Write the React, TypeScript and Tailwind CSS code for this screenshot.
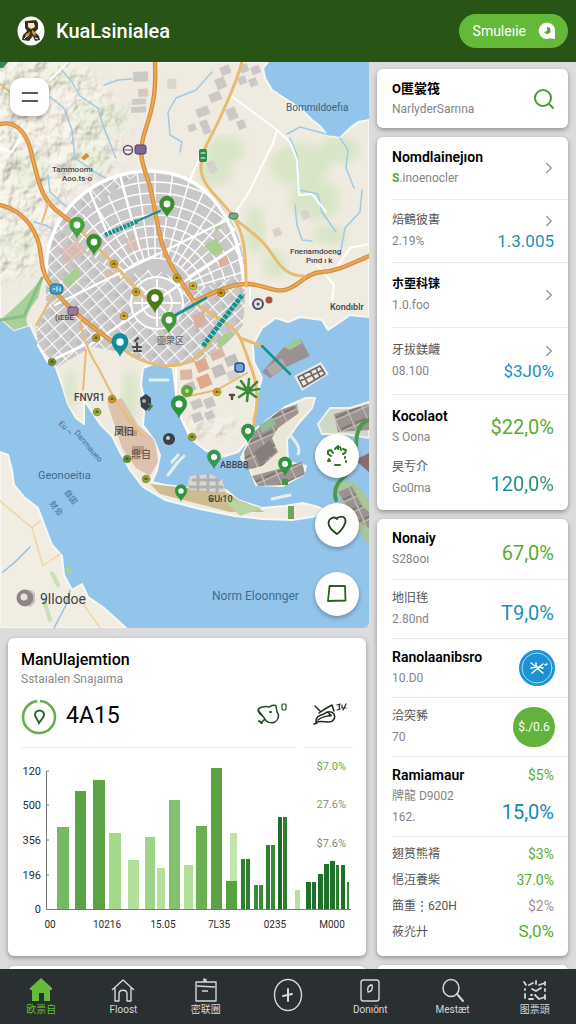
import React from "react";
import { ChevronRight, Search } from "lucide-react";

const UI_FONT = "font-['Roboto','Noto_Sans_CJK_JP',sans-serif]";

const CITY =
  "M46,275 C44,215 92,171 150,171 C208,172 246,220 246,285 L243,325 Q212,366 165,367 L120,352 L84,345 L86,350 L56,368 L38,345 L36,328 L46,305 Z";

const MAINLAND =
  "M0,62 H268 L263,68 265,78 272,90 284,98 300,108 312,120 320,126 328,136 340,138 350,128 358,122 369,120 V317 L350,315 340,322 328,330 322,320 300,317 288,322 276,318 262,328 253,345 254,362 262,378 257,395 253,420 248,440 238,452 222,457 205,450 190,438 180,415 176,395 173,368 158,362 143,368 141,385 145,402 143,425 154,440 160,455 157,470 152,482 165,485 190,488 226,490 238,500 262,508 285,506 303,503 318,507 328,512 312,517 292,520 262,519 235,516 200,509 165,500 143,487 130,470 120,452 112,436 100,424 92,412 84,400 84,424 76,418 68,404 62,385 56,368 44,352 36,338 30,325 14,330 0,318 Z";

const PINS: { x: number; y: number; s: number; fill: string }[] = [
  { x: 167, y: 204, s: 1, fill: "#35912f" },
  { x: 77, y: 225, s: 1, fill: "#45a339" },
  { x: 94, y: 242, s: 1, fill: "#35912f" },
  { x: 155, y: 298, s: 1.1, fill: "#4a7c12" },
  { x: 169, y: 320, s: 1, fill: "#3f9a35" },
  { x: 120, y: 342, s: 1.1, fill: "#0c8ba3" },
  { x: 179, y: 404, s: 1.05, fill: "#2f9440" },
  { x: 248, y: 431, s: 0.9, fill: "#2f9440" },
  { x: 214, y: 457, s: 0.9, fill: "#339a4c" },
  { x: 285, y: 464, s: 0.9, fill: "#2f9440" },
  { x: 181, y: 491, s: 0.8, fill: "#2f9440" },
];

const DOTS: { x: number; y: number; fill: string }[] = [
  { x: 114, y: 264, fill: "#d3a616" },
  { x: 136, y: 292, fill: "#d3a616" },
  { x: 124, y: 316, fill: "#e0b52c" },
  { x: 177, y: 278, fill: "#cfa51b" },
  { x: 193, y: 286, fill: "#e0b52c" },
  { x: 221, y: 293, fill: "#cc9a20" },
  { x: 96, y: 338, fill: "#b59a20" },
  { x: 217, y: 392, fill: "#e0ac20" },
  { x: 112, y: 399, fill: "#c79a28" },
  { x: 52, y: 362, fill: "#5f9a40" },
  { x: 97, y: 412, fill: "#8fb53a" },
  { x: 192, y: 437, fill: "#8aa832" },
  { x: 146, y: 479, fill: "#8aa832" },
  { x: 127, y: 459, fill: "#4d9a3a" },
];

const TREES = [
  [20, 90, 22, 14], [60, 75, 20, 10], [100, 120, 26, 20], [30, 170, 18, 20],
  [90, 160, 20, 14], [225, 150, 20, 14], [215, 172, 18, 14], [300, 165, 30, 22],
  [315, 200, 26, 20], [340, 150, 20, 14], [255, 230, 10, 24], [275, 265, 12, 14],
  [20, 240, 18, 14], [70, 390, 6, 20], [130, 395, 8, 26], [330, 235, 18, 10],
];

const BUILDINGS: [number, number, number, number, string][] = [
  [133, 72, 15, 10, "#cdcac6"], [167, 79, 9, 10, "#d8d4ce"], [138, 89, 10, 8, "#d9c9bd"],
  [132, 99, 14, 6, "#cdcac6"], [131, 107, 15, 6, "#cdcac6"], [214, 80, 10, 11, "#cbc8c5"],
  [219, 68, 10, 9, "#cbc8c5"], [208, 95, 12, 9, "#cbc8c5"], [195, 110, 13, 9, "#cbc8c5"],
  [199, 122, 8, 14, "#cbc8c5"], [187, 126, 8, 7, "#cbc8c5"], [225, 110, 10, 12, "#cbc8c5"],
  [236, 122, 8, 9, "#cbc8c5"], [239, 66, 8, 8, "#cbc8c5"], [250, 68, 9, 8, "#cbc8c5"],
  [237, 78, 8, 8, "#cbc8c5"], [248, 80, 8, 8, "#cbc8c5"], [206, 163, 8, 12, "#d5d1cb"],
  [300, 212, 8, 9, "#d9d2ca"], [272, 230, 8, 8, "#d9d2ca"], [180, 370, 12, 10, "#d9b7a3"],
  [194, 362, 12, 12, "#dfa98c"], [208, 350, 14, 12, "#d9b7a3"], [196, 378, 13, 12, "#dfa98c"],
  [211, 368, 12, 11, "#c3bfbd"], [224, 358, 12, 10, "#c3bfbd"], [183, 385, 11, 9, "#c3bfbd"],
  [226, 373, 12, 9, "#d4d0cd"], [190, 402, 11, 9, "#c9c6c4"], [203, 400, 10, 10, "#c9c6c4"],
  [191, 415, 10, 9, "#c9c6c4"], [204, 413, 9, 8, "#c9c6c4"],
];

// rings and spokes of the old town, drawn from its centre
const rings = [40, 50, 61, 72, 83, 94, 105, 116, 127];
const spokes = Array.from({ length: 23 }, (_, i) => {
  const a = Math.PI + (i * Math.PI) / 22;
  return {
    x1: 155 + Math.cos(a) * 40,
    y1: 298 + Math.sin(a) * 40,
    x2: 155 + Math.cos(a) * 140,
    y2: 298 + Math.sin(a) * 140,
  };
});

function CityMap() {
  return (
    <svg
      viewBox="0 62 369 566"
      preserveAspectRatio="xMidYMid slice"
      className="block h-full w-full"
      role="img"
      aria-label="Map"
      fill="none"
      strokeLinecap="round"
      strokeLinejoin="round"
    >
      <defs>
        <pattern id="blocks" width="12" height="10" patternUnits="userSpaceOnUse" patternTransform="rotate(-42)">
          <rect width="12" height="10" fill="#c9c7c8" />
          <path d="M7,5 H12 V10 H7 Z" fill="#c0bebf" />
          <path d="M0,0 H12 M0,0 V10" stroke="#fff" strokeWidth="2.2" />
        </pattern>
        <pattern id="port" width="15" height="13" patternUnits="userSpaceOnUse" patternTransform="rotate(-24)">
          <rect width="15" height="13" fill="#9c9390" />
          <path d="M0,0 H15 M0,0 V13" stroke="#c9c1ba" strokeWidth="2" />
          <path d="M3,11 H13" stroke="#7d7674" strokeWidth="2" />
        </pattern>
        <clipPath id="city"><path d={CITY} /></clipPath>
        <clipPath id="land"><path d={MAINLAND} /></clipPath>
        <clipPath id="upper"><path d="M60,230 L150,165 H250 V272 L190,292 Q155,255 122,280 Z" /></clipPath>
        <filter id="relief" x="0" y="0" width="100%" height="100%">
          <feTurbulence type="fractalNoise" baseFrequency="0.075 0.06" numOctaves="3" seed="8" />
          <feDiffuseLighting lightingColor="#f6f1e7" surfaceScale="5" diffuseConstant="1.25">
            <feDistantLight azimuth="235" elevation="52" />
          </feDiffuseLighting>
        </filter>
        <filter id="soft"><feGaussianBlur stdDeviation="4" /></filter>
        <filter id="fade" x="-20%" y="-20%" width="140%" height="140%"><feGaussianBlur stdDeviation="9" /></filter>
        <mask id="hills" maskUnits="userSpaceOnUse" x="0" y="62" width="369" height="400">
          <path d="M-20,40 H60 L125,110 L118,165 L64,200 L38,270 L-20,285 Z" fill="#fff" filter="url(#fade)" />
          <path d="M185,415 H235 V440 H195 Z" fill="#999" filter="url(#soft)" />
        </mask>
      </defs>

      {/* Sea and land */}
      <rect x="0" y="62" width="369" height="566" fill="#93c4e9" />
      <path d={MAINLAND} fill="#f0ebe1" stroke="#f6f8f2" strokeWidth="2" />
      <g clipPath="url(#land)">
        {TREES.map(([x, y, rx, ry]) => (
          <ellipse key={`${x}-${y}`} cx={x} cy={y} rx={rx} ry={ry} fill="#cfe3bd" opacity="0.7" filter="url(#soft)" />
        ))}
        <g mask="url(#hills)" opacity="0.5">
          <rect x="0" y="62" width="260" height="400" fill="#fff" filter="url(#relief)" />
        </g>
        <path d="M0,320 Q25,300 44,275 L38,298 Q20,320 30,328 L10,335 Z" fill="#a9cf9c" />
        <path d="M107,402 L122,398 L138,425 L155,440 L158,462 L150,476 L136,468 L122,448 Z" fill="#ddc3ae" />
        <path d="M150,484 L225,492 L265,512 L230,512 L160,494 Z" fill="#cdbb92" />
        <path d="M222,497 L262,508 L240,516 Z" fill="#b9d6a0" />
        <path d="M118,426 h9 v7 h-9 z M130,430 h7 v6 h-7 z M132,446 h12 v8 h-12 z" fill="#b89d8d" />
      </g>

      {/* Lower left coast */}
      <path
        d="M0,452 L8,455 12,470 14,485 24,497 38,508 44,524 52,545 62,556 64,575 72,590 82,584 88,597 104,608 126,628 H0 Z"
        fill="#f2ede2" stroke="#f8f8f3" strokeWidth="2"
      />
      <path d="M52,573 L58,585 M44,600 L50,620" stroke="#c9dfb4" strokeWidth="4" />
      <path d="M65,566 L73,570 L68,575 Z" fill="#a6d392" />
      <path d="M0,501 L32,528 L43,566 L60,554 M32,528 L40,521 M84,605 L100,628" stroke="#f0d69e" strokeWidth="1.5" />
      <path d="M3,572 L14,563 L30,547 M54,628 L66,605 L70,590" stroke="#8fc3e6" strokeWidth="1.5" />

      {/* Islands and docks */}
      <path d="M241,458 L254,430 285,407 306,398 315,398 312,408 298,424 287,440 288,462 306,466 304,474 282,486 256,485 250,470 Z" fill="#e9e7d6" stroke="#f6f6ee" strokeWidth="2" />
      <path d="M244,452 L256,430 L280,410 L297,404 L299,413 L278,428 L272,438 L278,452 L262,466 L246,470 Z" fill="url(#port)" />
      <path d="M252,476 L275,470 L302,462 L305,474 L282,485 L258,486 Z" fill="url(#port)" />
      <path d="M254,452 L270,440 L276,452 L260,464 Z" fill="#857d7b" />
      <path d="M259,425 L272,417 L276,424 L262,433 Z" fill="#93b89a" />
      <path d="M262,372 L284,347 L301,340 L310,356 L284,368 L270,378 Z" fill="#9a9290" />
      <path d="M266,368 L282,358 L286,366 L272,376 Z" fill="#b3aba7" />
      <path d="M284,347 L298,338 L302,343 L290,350 Z" fill="#9ccb8e" />
      <path d="M294,376 L321,362 L329,374 L302,391 Z" fill="#e9e9e6" />
      <path d="M298,377 L320,366 L325,374 L303,387 Z M303,375 L308,384 M310,371 L315,380 M316,368 L320,377 M300,381 L323,370" stroke="#6d6663" strokeWidth="1.6" />
      <path d="M318,424 L330,408 350,408 369,402 V438 L345,434 322,434 Z" fill="#cfd8c6" stroke="#eef3ec" strokeWidth="2" />
      <path d="M334,414 L369,404 V430 L338,432 Z" fill="url(#port)" />
      <path d="M355,460 L369,453 V472 Z" fill="#85706c" />
      <path d="M336,490 Q348,474 358,486 L369,500 V546 L350,520 Z" fill="#a9c59a" />
      <path d="M338,492 L352,486 L362,506 L369,512 V528 L356,520 Z" fill="url(#port)" />
      <path d="M188,483 L190,476 210,474 222,480 226,492 190,490 Z" fill="#d8d8d6" />
      <path d="M193,480 H219 M190,487 H222 M198,476 V490 M208,475 V491 M217,479 V492" stroke="#b3afad" strokeWidth="3" />
      <path d="M288,506 h6 v13 h-6 z" fill="#6fa45f" />
      <path d="M172,462 L178,455 M168,475 L178,462 L184,456 M290,435 Q302,448 298,454 M272,499 L290,495 M305,512 L328,518 M150,380 H168" stroke="#e4efe9" strokeWidth="3" />

      {/* Streams */}
      <g stroke="#9dcae6" strokeWidth="1.5">
        <path d="M60,68 L72,82 L80,96 L98,108 L104,128 L116,158" />
        <path d="M50,97 L64,108 L72,130 L75,158 L95,172 L112,182" />
        <path d="M104,85 L118,80 L132,79 M212,72 L196,90 L176,98 L168,112 L170,135 L182,142 L180,152" />
        <path d="M290,138 L297,155 L299,190 L318,194 L322,212 L336,232 M295,205 L297,225 L302,240 L312,241 M287,134 L300,127 L330,135 M340,138 L348,150 L346,168 L354,188 M362,190 L360,212 L345,228 L340,255" />
        <path d="M48,175 L50,192 L70,210 M34,222 L45,225 L58,232" />
      </g>

      {/* White country roads */}
      <g stroke="#fff" strokeWidth="2">
        <path d="M68,62 L50,80 M0,148 L12,152 L20,138 M230,95 L277,130 L273,143 L250,190 L233,217 M277,130 L290,142 L297,160 L299,195 L312,194 L326,212" />
        <path d="M200,157 L190,180 M332,300 L334,285 L317,265 M369,244 L350,248 L335,270 M250,287 V305" />
      </g>

      {BUILDINGS.map(([x, y, w, h, fill]) => (
        <rect key={`${x}-${y}`} x={x} y={y} width={w} height={h} fill={fill} transform={`rotate(${x > 180 ? -22 : -3} ${x} ${y})`} />
      ))}

      {/* City blocks */}
      <path d={CITY} fill="url(#blocks)" />
      <g clipPath="url(#city)">
        <g clipPath="url(#upper)">
          <path d="M44,165 H250 V300 H44 Z" fill="#c9c7c8" />
          <g stroke="#fff" strokeWidth="1.4">
            {rings.map((r) => (
              <circle key={r} cx="155" cy="298" r={r} />
            ))}
            {spokes.map((s, i) => (
              <line key={i} {...s} />
            ))}
          </g>
        </g>
        <path d="M60,250 L78,240 L86,252 L66,264 Z M124,240 L138,232 L142,248 L130,252 Z M104,272 L114,266 L118,274 L108,280 Z" fill="#dcb9aa" opacity="0.7" />
        <path d="M62,280 L78,266 L80,276 L68,288 Z M204,246 L216,238 L224,250 L214,256 Z M214,224 L222,226 L216,232 Z M216,340 L232,330 L234,340 L220,350 Z" fill="#a8cf90" />
        <path d="M218,260 L226,254 L230,264 L220,268 Z M192,316 L204,310 L206,324 L196,330 Z" fill="#dcb0a0" />
        <circle cx="157" cy="303" r="26" fill="#d0cece" stroke="#fff" strokeWidth="2" />
        <circle cx="157" cy="303" r="15" stroke="#fff" strokeWidth="1.5" />
        <path d="M134,303 H180 M157,280 V326 M141,287 L173,319" stroke="#fff" strokeWidth="2" />
        <path d="M55,305 L233,217 M90,345 L246,240 M85,180 L108,235 M120,175 L140,250" stroke="#fff" strokeWidth="2.4" />
      </g>
      <path d="M46,275 C44,215 92,171 150,171 C208,172 240,220 244,287" stroke="#fff" strokeWidth="3.5" />
      <path d="M38,345 L48,362 L84,345" stroke="#fff" strokeWidth="2.5" />

      {/* Highways */}
      <g stroke="#d58f3c" strokeWidth="4.4">
        <path d="M0,124 C14,121 23,130 28,142 S36,180 44,195 S62,214 74,224" />
        <path d="M0,205 C16,209 30,220 37,238 S38,266 50,284 S74,312 84,320 S112,342 120,346" />
        <path d="M155,62 C156,90 154,104 146,128 S141,160 148,180 S156,230 165,252 S184,284 194,302" />
        <path d="M194,302 C212,293 230,284 247,284 S275,294 288,289 S306,273 322,272 S350,264 369,256" />
      </g>
      <g stroke="#e9a85a" strokeWidth="2">
        <path d="M0,124 C14,121 23,130 28,142 S36,180 44,195 S62,214 74,224" />
        <path d="M0,205 C16,209 30,220 37,238 S38,266 50,284 S74,312 84,320 S112,342 120,346" />
        <path d="M155,62 C156,90 154,104 146,128 S141,160 148,180 S156,230 165,252 S184,284 194,302" />
        <path d="M194,302 C212,293 230,284 247,284 S275,294 288,289 S306,273 322,272 S350,264 369,256" />
      </g>
      <g stroke="#e6bb72" strokeWidth="3">
        <path d="M242,62 C236,84 228,100 220,118 S201,150 201,168 S220,198 232,215 S246,250 246,286" />
        <path d="M233,217 C250,232 262,238 272,254 S290,276 304,276" />
        <path d="M74,224 L112,262 L145,298" />
        <path d="M120,346 C136,362 160,368 178,365 S206,348 214,338" />
        <path d="M194,302 C214,318 236,324 242,342 S258,380 257,400 S253,414 254,424" />
        <path d="M80,317 C84,350 96,362 102,375 S120,410 142,436 M86,350 L83,390 M180,398 L217,390 L247,373 M56,290 L36,325 M0,84 L14,95 L18,115 M48,204 L42,222" strokeWidth="2" />
        <path d="M240,338 L262,346" />
      </g>
      <path d="M176,368 V395 L182,420 L192,438" stroke="#fff" strokeWidth="2" />
      <path d="M0,320 L24,316 L42,278" stroke="#88bf84" strokeWidth="3" />
      <path d="M369,420 C356,424 356,440 356,450 M352,470 C340,480 332,486 336,500" stroke="#4c9a4a" strokeWidth="4" />

      {/* Transit lines */}
      <g stroke="#15938f">
        <path d="M137,221 L160,211" strokeWidth="2" />
        <path d="M105,235 L138,221" strokeWidth="4.5" strokeDasharray="3 1" strokeLinecap="butt" />
        <path d="M174,316 L206,298" strokeWidth="3" />
        <path d="M203,346 L243,294" strokeWidth="5" strokeDasharray="4 1" strokeLinecap="butt" />
        <path d="M262,346 L290,374" strokeWidth="2.5" />
      </g>

      {/* Road shields and small markers */}
      <rect x="135" y="145" width="11" height="9" rx="2" fill="#7b6699" stroke="#4c4068" />
      <circle cx="128" cy="150" r="4.5" fill="#f4efe6" stroke="#5b4a63" strokeWidth="1.5" />
      <path d="M125,150 h6" stroke="#5b4a63" />
      <rect x="199" y="149" width="8" height="13" rx="2" fill="#2f8b4b" />
      <path d="M201,153 h4 M201,158 h4" stroke="#fff" />
      <rect x="229" y="213" width="9" height="6" rx="3" fill="#6fae83" stroke="#3d8257" />
      <rect x="50" y="284" width="13" height="10" rx="4" fill="#3f9cc4" stroke="#226f94" />
      <path d="M53,289 h2 M57,287 v4 M60,288 v3" stroke="#fff" />
      <rect x="68" y="307" width="10" height="8" rx="2" fill="#a1788f" stroke="#5f4d80" />
      <rect x="82" y="155" width="7" height="4" fill="#d28a3e" transform="rotate(-40 85 157)" />
      <circle cx="258" cy="304" r="5" fill="#dfe2ea" stroke="#4a5266" strokeWidth="2" />
      <circle cx="258" cy="304" r="1.5" fill="#4a5266" />
      <circle cx="269" cy="300" r="3.5" fill="#a5553a" />
      <path d="M0,62 h8 l-5,6 h-3 z" fill="#2f8b4b" />
      {DOTS.map((d) => (
        <g key={`${d.x}-${d.y}`}>
          <circle cx={d.x} cy={d.y} r="3.8" fill={d.fill} stroke="#7b681c" strokeWidth="0.6" />
          <path d={`M${d.x - 1.5},${d.y} h3 M${d.x},${d.y - 1.5} v2`} stroke="#5a4a12" />
        </g>
      ))}
      <path d="M140,398 l6,-4 5,4 v8 l-5,5 -5,-4 z" fill="#39404a" /><circle cx="144" cy="401" r="2" fill="#a7adb3" />
      <path d="M149,404 l3,2 -3,4" stroke="#3b8a3a" strokeWidth="2" />
      <circle cx="169" cy="439" r="6" fill="#39404a" /><circle cx="168" cy="438" r="2" fill="#c9cdd1" />
      <rect x="235" y="363" width="9" height="9" rx="3" fill="#7aa1d8" stroke="#2b4a85" strokeWidth="1.5" />
      <circle cx="187" cy="391" r="6" fill="#5aa83c" /><circle cx="187" cy="391" r="2" fill="#b6dd92" />
      <path d="M248,391 L237,387 M248,391 L241,381 M248,391 L249,379 M248,391 L257,382 M248,391 L259,389 M248,391 L256,397 M248,391 L247,401 M248,391 L239,397" stroke="#3b8a3a" strokeWidth="2.6" />
      <path d="M137,343 v8 M133,347 h8 M134,351 h7 M135,341 l3,-3" stroke="#4d4a49" strokeWidth="2" />
      <path d="M232,395 v4 M230,395 h4" stroke="#5e4936" strokeWidth="2.5" />
      <path d="M209,501 l2,-5 l2,5 z M282,479 h6 v6 h-6 z" fill="#3f9a3f" />

      {PINS.map((p) => (
        <g key={`${p.x}-${p.y}`} transform={`translate(${p.x} ${p.y}) scale(${p.s})`}>
          <path d="M0,13 C-2,8 -7.5,5 -7.5,-0.5 A7.5,7.5 0 0 1 7.5,-0.5 C7.5,5 2,8 0,13 Z" fill={p.fill} stroke="#2a6f35" strokeOpacity="0.4" strokeWidth="0.6" />
          <circle r="3.4" fill="#fff" />
        </g>
      ))}

      {/* Labels */}
      <g className="font-['Roboto','Noto_Sans_CJK_JP',sans-serif]" fill="#3f4347" fontSize="8" fontWeight="500">
        <text x="286" y="111" fontSize="10" fontWeight="400" fill="#3c5f7b">Bommıldoefıa</text>
        <text x="52" y="172">Tammoomı</text>
        <text x="62" y="181">Aoo.ts·o</text>
        <text x="290" y="254">Fnenamdoeng</text>
        <text x="306" y="263">Pınd ı k</text>
        <text x="330" y="310" fontSize="9">Kondıblr</text>
        <text x="55" y="320">(IEBE</text>
        <text x="157" y="344" fontSize="9" fill="#6b6b6d">圖罘区</text>
        <text x="74" y="401" fontSize="10">FNVЯ1</text>
        <text x="114" y="435" fontSize="10" fill="#4d3c35">凤旧</text>
        <text x="131" y="458" fontSize="10" fill="#6b5a52">鼎自</text>
        <text x="220" y="468" fontSize="9">ABBBB</text>
        <text x="208" y="502" fontSize="9">GUı10</text>
        <g fill="#3d6d96" fontWeight="400">
          <text x="38" y="479" fontSize="11">Geonoeitıa</text>
          <text x="212" y="600" fontSize="12">Norm Eloonnger</text>
          <text x="58" y="424" transform="rotate(45 58 424)">Eu ~</text>
          <text x="74" y="433" transform="rotate(50 74 433)">Danmaueo</text>
          <text x="64" y="492" transform="rotate(55 64 492)">自国</text>
          <text x="49" y="504" transform="rotate(50 49 504)">財会</text>
        </g>
        <text x="40" y="604" fontSize="14" fontWeight="400">9llodoe</text>
      </g>
      <circle cx="25" cy="598" r="8.5" fill="#8f8587" />
      <circle cx="24" cy="597" r="3.5" fill="#e8e3df" />
      <path d="M31,591 l3,3 v8 l-4,4" stroke="#c7bfbf" strokeWidth="2" />
    </svg>
  );
}

const BARS: [number, number, number, string][] = [
  [57, 12, 827, "#74b965"], [75, 11, 791, "#5ba345"], [93, 12, 780, "#5ba345"],
  [109, 12, 833, "#a4d989"], [128, 11, 860, "#b2df9a"], [145, 10, 837, "#9fd385"],
  [157, 8, 868, "#b5e19d"], [169, 11, 800, "#82c26e"], [184, 9, 865, "#b2df9a"],
  [196, 11, 826, "#6cb054"], [211, 11, 768, "#5ba142"], [230, 7, 833, "#bfe5ad"],
  [226, 11, 881, "#57a13e"], [241, 4, 859, "#2f7d2d"], [246, 4, 859, "#2f7d2d"],
  [254, 4, 885, "#3a8b35"], [259, 4, 885, "#3a8b35"], [266, 4, 845, "#2f7d2d"],
  [271, 4, 845, "#3a8b35"], [278, 4, 817, "#1f6d22"], [283, 4, 817, "#2f7d2d"],
  [295, 5, 890, "#b5e19d"], [306, 5, 882, "#21702a"], [312, 4, 882, "#21702a"],
  [318, 5, 874, "#21702a"], [324, 5, 864, "#21702a"], [330, 5, 861, "#21702a"],
  [336, 3, 865, "#2f7d2d"], [341, 4, 865, "#21702a"], [347, 2, 882, "#3a8b35"],
];

const Y_TICKS: [string, number][] = [["120", 771], ["500", 805], ["356", 840], ["196", 875], ["0", 909]];
const X_TICKS: [string, number][] = [["00", 50], ["10216", 107], ["15.05", 163], ["7L35", 219], ["0235", 275], ["M000", 332]];

function BarChart() {
  return (
    <svg viewBox="21 758 332 174" className="block w-full" role="img" aria-label="Bar chart">
      {BARS.map(([x, w, top, fill]) => (
        <rect key={x} x={x} y={top} width={w} height={909 - top} fill={fill} />
      ))}
      <path d="M49,771 H46.5 V909.5 H351 M46,805 h3 M46,840 h3 M46,875 h3" fill="none" stroke="#77797b" />
      <g className="font-['Roboto',sans-serif]" fontSize="11" fill="#2c2c2c">
        {Y_TICKS.map(([label, y]) => (
          <text key={label} x="41" y={y + 4} textAnchor="end">{label}</text>
        ))}
        {X_TICKS.map(([label, x]) => (
          <text key={label} x={x} y="928" fontSize="10" textAnchor="middle">{label}</text>
        ))}
        <text x="346" y="770" textAnchor="end" fill="#5fae3e">$7.0%</text>
        <text x="346" y="808" textAnchor="end" fill="#8a8f86"><tspan fill="#6db04c">2</tspan>7.6%</text>
        <text x="346" y="847" textAnchor="end" fill="#82877c">$7.6%</text>
      </g>
    </svg>
  );
}

interface RowProps {
  title: string;
  sub: React.ReactNode;
  titleClass?: string;
  className?: string;
  children?: React.ReactNode;
}

const STRONG = "text-[14px] font-semibold text-black";

function Row({ title, sub, titleClass = "text-[12px] text-[#555]", className, children }: RowProps) {
  return (
    <div className={`flex items-center justify-between ${className}`}>
      <div className="leading-[21px] whitespace-nowrap">
        <h3 className={titleClass}>{title}</h3>
        <p className="text-[12px] text-[#858585]">{sub}</p>
      </div>
      {children}
    </div>
  );
}

function Chevron({ label }: { label: string }) {
  return (
    <button aria-label={label} className="flex h-[21px] items-center justify-end text-[#999]">
      <ChevronRight className="-mr-1 h-[18px] w-[18px]" strokeWidth={2} />
    </button>
  );
}

const CARD = "rounded-md bg-white shadow-[0_2px_5px_rgba(0,0,0,0.35)]";
const LINE = "border-b border-[#ebebeb]";
const FAB = "flex h-11 w-11 items-center justify-center rounded-full bg-white shadow-[0_2px_4px_rgba(0,0,0,0.3)]";
const TAB = "flex flex-1 flex-col items-center pt-2 text-[10px] leading-[14px]";

export default function App() {
  return (
    <div className={`flex h-screen flex-col bg-[#dcdcdc] ${UI_FONT}`}>
      {/* Header */}
      <header className="flex h-[62px] shrink-0 items-center justify-between bg-[#285416] pr-2 pl-[17px]">
        <div className="flex items-center gap-[11px]">
          <svg viewBox="0 0 28 30" className="h-[30px] w-7" aria-hidden="true">
            <ellipse cx="14" cy="15" rx="13.5" ry="14.5" fill="#fff" />
            <path d="M8,5 L19,4 L21,7 V13 L18,16 L22,20 L23,24 L18,25 L16,20 L12,25 L5,24 L6,19 L10,15 L8,12 Z" fill="#3a3218" />
            <path d="M11,7 L17,7 L18,11 L14,13 L11,11 Z" fill="#f1e7cf" />
            <path d="M9,18 L13,16 L12,20 L8,22 Z M15,14 L19,17 L18,20 L15,17 Z" fill="#c79c3f" />
            <path d="M7,23 l3,-3 M18,22 l3,1" stroke="#fff" />
          </svg>
          <h1 className="text-[20px] font-medium text-white">KuaLsinialea</h1>
        </div>
        <button className="flex h-[34px] items-center gap-3 rounded-full bg-[#64b939] pr-3 pl-[14px] text-[14px] text-white">
          Smuleıie
          <svg viewBox="0 0 18 18" className="h-[18px] w-[18px]" aria-hidden="true">
            <path d="M9,0.5 A8.2,8.2 0 1 0 12,16.3 L17,17 V9 A8.2,8.2 0 0 0 9,0.5 Z" fill="#fff" />
            <path d="M9,5 A3.5,3.5 0 1 1 6,10 L9,9 Z" fill="#5aa83a" />
          </svg>
        </button>
      </header>

      <main className="flex min-h-0 flex-1 items-start overflow-y-auto [scrollbar-width:none]">
        <div className="flex min-w-0 flex-1 flex-col">
          {/* Map */}
          <section className="relative h-[566px] overflow-hidden rounded-br-md">
            <CityMap />
            <button aria-label="Menu" className="absolute top-4 left-[10px] flex h-[38px] w-[39px] items-center justify-center rounded-xl bg-white shadow-[0_2px_4px_rgba(0,0,0,0.3)]">
              <svg viewBox="0 0 16 10" className="h-[10px] w-4" stroke="#222" strokeWidth="1.6" aria-hidden="true">
                <path d="M0,1 H16 M0,9 H16" />
              </svg>
            </button>
            <div className="absolute right-[10px] bottom-3 flex flex-col gap-[25px]">
              <button aria-label="Route" className={FAB}>
                <svg viewBox="0 0 24 24" className="h-6 w-6" fill="none" stroke="#2f7a22" strokeWidth="2" strokeLinecap="round" strokeLinejoin="round" aria-hidden="true">
                  <path d="M8,9 L6,6 L3,7 L3,10 L6,12 M10,5 L13,2 V5 M15,3 L16,6 M18,5 L21,6 L20,9 L18,10 M20,13 V14" />
                  <path d="M4,15 L3,17 H5 Z M21,17 v1 M10,21 h5" />
                </svg>
              </button>
              <button aria-label="Favourite" className={FAB}>
                <svg viewBox="0 0 24 24" className="h-6 w-6" fill="none" stroke="#23431f" strokeWidth="1.8" strokeLinecap="round" strokeLinejoin="round" aria-hidden="true">
                  <path d="M12,6 C9,3 4,5 3.5,10 C3.5,15 8,18 12,21 C16,18 19,14 20.5,9 C21,4 17,2 12,5" />
                </svg>
              </button>
              <button aria-label="Area" className={FAB}>
                <svg viewBox="0 0 24 24" className="h-6 w-6" fill="none" stroke="#2b611f" strokeWidth="1.8" strokeLinejoin="round" aria-hidden="true">
                  <path d="M4.5,4 L20,4 L20.5,18.5 L3,19 Z" />
                </svg>
              </button>
            </div>
          </section>

          {/* Statistics card */}
          <section className={`mt-[10px] mr-[3px] ml-2 px-[13px] pt-3 pb-6 ${CARD}`}>
            <h2 className="text-[16px] leading-5 font-medium text-black">ManUlajemtion</h2>
            <p className="text-[12px] leading-[18px] text-[#8a8a8a]">Sstaıalen Snaȷaıma</p>
            <div className="mt-[9px] flex gap-[9px]">
              <div className={`flex h-[51px] flex-1 items-start justify-between pr-2 ${LINE}`}>
                <div className="flex items-center gap-[9px]">
                  <svg viewBox="0 0 36 38" className="h-[38px] w-9" fill="none" aria-hidden="true">
                    <circle cx="18" cy="20" r="16" stroke="#68ad4c" strokeWidth="2.6" strokeDasharray="98 3" strokeDashoffset="-76" />
                    <path d="M18,26 C17,23 14,20 14,18 A4.3,4.3 0 0 1 23,18 C23,20 20,23 18,26 Z" stroke="#25682b" strokeWidth="2" />
                  </svg>
                  <span className="text-[23px] leading-[38px] text-black">4A15</span>
                </div>
                <svg viewBox="0 0 30 24" className="mt-[5px] h-6 w-[30px]" fill="none" stroke="#224a1f" strokeWidth="1.5" strokeLinecap="round" strokeLinejoin="round" aria-hidden="true">
                  <path d="M1,8 C2,5 8,4 12,5 C14,4 17,2 19,4 L20,10 C23,13 21,18 18,20 C14,22 9,20 8,17 L4,21 M8,17 C7,14 1,12 1,8 Z" />
                  <path d="M2,19 L5,21 M13,10 h1" strokeWidth="2" />
                  <rect x="25" y="2" width="4" height="6" rx="1" strokeWidth="1.2" />
                </svg>
              </div>
              <div className={`h-[51px] w-[49px] pl-2 ${LINE}`}>
                <svg viewBox="0 0 36 24" className="mt-[5px] h-6 w-9" fill="none" stroke="#1f2a1d" strokeWidth="1.5" strokeLinecap="round" strokeLinejoin="round" aria-hidden="true">
                  <path d="M3,4 L8,9 M7,11 C11,8 16,5 20,3 L22,9 M4,20 C3,15 8,13 12,12 C15,9 20,9 22,12 C24,16 21,20 17,20 C13,20 9,19 4,20 Z M6,18 C10,14 14,15 19,13 M2,22 l3,-1 M16,10 l3,4" />
                  <path d="M25,3 l3,-1 l-1,3 l1,2 l-3,1 M31,8 l3,-6 M30,3 v3 h4" strokeWidth="1.2" />
                </svg>
              </div>
            </div>
            <div className="mt-[10px]">
              <BarChart />
            </div>
          </section>
          <div className={`mt-[10px] mr-[3px] ml-2 h-6 shrink-0 ${CARD}`} />
        </div>

        {/* Side panel */}
        <aside className="flex w-[207px] shrink-0 flex-col gap-[9px] px-2 pt-[7px]">
          <form className={`flex h-[59px] shrink-0 items-center justify-between pr-3 pl-[15px] ${CARD}`}>
            <div className="min-w-0">
              <label htmlFor="search" className="block text-[13px] leading-5 font-bold text-black">O匿裳筏</label>
              <input
                id="search"
                placeholder="NarlyderSarnna"
                className="block h-5 w-full text-[12px] text-[#555] outline-none placeholder:text-[#858585]"
              />
            </div>
            <button type="button" aria-label="Search" className="shrink-0 text-[#4d9a34]">
              <Search className="h-6 w-6" strokeWidth={2} />
            </button>
          </form>

          <section className={`pb-[11px] pl-[15px] ${CARD}`}>
            <Row title="Nomdlainejıon" titleClass={STRONG} className={`py-[10px] pr-[14px] ${LINE}`} sub={<><b className="text-[#58ad38]">S</b>.inoenocler</>}>
              <Chevron label="Open Nomdlainejıon" />
            </Row>
            <Row title="焙鶴彼軎" sub="2.19%" className={`py-[10px] pr-[14px] ${LINE}`}>
              <div className="flex flex-col items-end">
                <Chevron label="Open 焙鶴彼軎" />
                <span className="text-[17px] leading-[21px] text-[#1a93b5]">1.3.005</span>
              </div>
            </Row>
            <Row title="朩垔科铼" titleClass="text-[12px] font-bold text-black" sub="1.0.foo" className={`py-[11px] pr-[14px] ${LINE}`}>
              <Chevron label="Open 朩垔科铼" />
            </Row>
            <Row title="牙拔鎂衊" sub="08.100" className={`py-3 pr-[14px] ${LINE}`}>
              <div className="flex flex-col items-end">
                <Chevron label="Open 牙拔鎂衊" />
                <span className="text-[17px] leading-[21px] text-[#1a8fc0]">$3J0%</span>
              </div>
            </Row>
            <Row title="Kocolaot" titleClass={STRONG} sub="S Oona" className="pt-[11px] pr-[14px]">
              <span className="text-[20px] leading-[21px] text-[#57ab35]">$22,0%</span>
            </Row>
            <Row title="旲亐介" sub="Go0ma" className="pt-[9px] pr-[14px]">
              <span className="mt-3 bg-linear-to-r from-[#168cab] to-[#2f8f52] bg-clip-text text-[20px] leading-[21px] text-transparent">120,0%</span>
            </Row>
          </section>

          <section className={`pl-[15px] ${CARD}`}>
            <Row title="Nonaiy" titleClass={STRONG} sub="S28ooı" className={`py-[9px] pr-[14px] ${LINE}`}>
              <span className="mt-2 text-[20px] leading-[21px] text-[#57ab35]">67,0%</span>
            </Row>
            <Row title="地旧毪" sub="2.80nd" className={`py-2 pr-[14px] ${LINE}`}>
              <span className="mt-2 text-[20px] leading-[21px] text-[#1a8fb5]">T9,0%</span>
            </Row>
            <Row title="Ranolaanibsro" titleClass={STRONG} sub="10.D0" className={`py-2 pr-[13px] ${LINE}`}>
              <svg viewBox="0 0 36 36" className="h-9 w-9 shrink-0" fill="none" stroke="#fff" strokeLinecap="round" aria-hidden="true">
                <circle cx="18" cy="18" r="18" fill="#1c92d3" stroke="none" />
                <circle cx="18" cy="18" r="15" stroke="#a9dcf5" />
                <path d="M12,13 L17,17 L12,18 M13,23 L18,19 L24,14 M18,17 L24,18 M19,19 L24,23 M26,15 l2,-1 M17,13 v4" strokeWidth="1.5" />
              </svg>
            </Row>
            <Row title="洽突豨" sub="70" className={`py-2 pr-[13px] ${LINE}`}>
              <span className="flex h-10 w-[42px] items-center justify-center rounded-full bg-[#62b33c] text-[12px] text-white">$./0.6</span>
            </Row>
            <div className={`flex justify-between py-2 pr-[14px] ${LINE}`}>
              <div className="text-[12px] leading-[21px] text-[#858585]">
                <h3 className={STRONG}>Ramiamaur</h3>
                <p>牌龍 D9002</p>
                <p>162.</p>
              </div>
              <div className="flex flex-col items-end">
                <span className="text-[14px] leading-[21px] text-[#57ab35]">$5%</span>
                <span className="mt-4 text-[20px] leading-[21px] text-[#1686ae]">15,0%</span>
              </div>
            </div>
            <dl className="grid auto-rows-[26px] grid-cols-[1fr_auto] items-center pt-1 pr-[14px] pb-[11px] text-[12px] text-[#555]">
              <dt>翅筼熊褙</dt>
              <dd className="text-right text-[14px] text-[#57ab35]">$3%</dd>
              <dt>悒沍養柴</dt>
              <dd className="text-right text-[14px] text-[#57ab35]">37.0%</dd>
              <dt>筁重⋮620H</dt>
              <dd className="text-right text-[14px] text-[#a09297]">$2%</dd>
              <dt>莜灮廾</dt>
              <dd className="text-right text-[17px] text-[#57ab35]">S,0%</dd>
            </dl>
          </section>
          <div className={`h-6 shrink-0 ${CARD}`} />
        </aside>
      </main>

      {/* Bottom tabs */}
      <nav className="relative flex h-[55px] shrink-0 bg-[#2a2f32] text-[#d5d7d8]">
        <a href="#home" className={`${TAB} text-[#67bb3c]`}>
          <svg viewBox="0 0 24 26" className="h-[26px] w-6" fill="currentColor" aria-hidden="true">
            <path d="M12,1 L23,11 V13 H21 V24 H15 V16 H10 V24 H3 V13 H1 V11 Z" />
          </svg>
          <span>欧票自</span>
        </a>
        <a href="#floost" className={TAB}>
          <svg viewBox="0 0 24 26" className="h-[26px] w-6" fill="none" stroke="currentColor" strokeWidth="1.4" strokeLinejoin="round" aria-hidden="true">
            <path d="M1,13 L12,3 L23,13 M4,11 V24 H8 V17 C8,12 16,12 16,17 V24 H20 V11" />
          </svg>
          <span>Floost</span>
        </a>
        <a href="#files" className={TAB}>
          <svg viewBox="0 0 24 26" className="h-[26px] w-6" fill="none" stroke="currentColor" strokeWidth="1.4" strokeLinejoin="round" aria-hidden="true">
            <path d="M2,5 H22 V24 H2 Z M3,9 L21,10 M8,14 H14 M10,5 V2 L12,3 V5" />
          </svg>
          <span>密联圈</span>
        </a>
        <a href="#add" aria-label="Add" className={TAB}>
          <svg viewBox="0 0 30 36" className="h-9 w-[30px]" fill="none" stroke="currentColor" strokeWidth="1.4" strokeLinecap="round" aria-hidden="true">
            <ellipse cx="15" cy="18" rx="13.5" ry="15.5" />
            <path d="M15,12 V24 M10,19 L19,17" strokeWidth="2" />
          </svg>
        </a>
        <a href="#donation" className={TAB}>
          <svg viewBox="0 0 24 26" className="h-[26px] w-6" fill="none" stroke="currentColor" strokeWidth="1.4" aria-hidden="true">
            <rect x="3" y="3" width="18" height="21" rx="2.5" />
            <path d="M14,8 C10,8 9,12 10,15 C14,15 15,11 14,8 L12,8" />
          </svg>
          <span>Donıönt</span>
        </a>
        <a href="#search-tab" className={TAB}>
          <svg viewBox="0 0 24 26" className="h-[26px] w-6" fill="none" stroke="currentColor" strokeWidth="1.5" strokeLinecap="round" aria-hidden="true">
            <ellipse cx="10" cy="11" rx="8" ry="8.5" />
            <path d="M16,17 L22,24" strokeWidth="2" />
          </svg>
          <span>Mestæt</span>
        </a>
        <a href="#more" className={TAB}>
          <svg viewBox="0 0 24 26" className="h-[26px] w-6" fill="none" stroke="currentColor" strokeWidth="1.8" strokeLinecap="round" aria-hidden="true">
            <path d="M1,5 l2,3 M6,8 l4,-2 M13,4 v3 M16,8 l6,-2 M22,5 v3 M2,12 v1 M9,12 L13,14 L18,11 M22,12 v2 M2,17 v4 M6,22 h4 M12,18 L16,22 L22,20 M22,18 v4 M8,18 h1" />
          </svg>
          <span>图票頭</span>
        </a>
      </nav>
    </div>
  );
}
